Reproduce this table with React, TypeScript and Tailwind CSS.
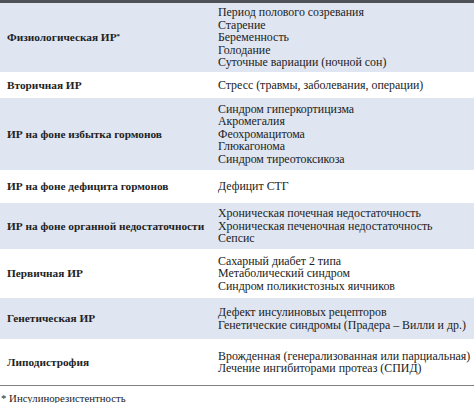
const rows: { label: string; items: string[]; h: string; blue: boolean }[] = [
  {
    label: "Физиологическая ИР*",
    items: [
      "Период полового созревания",
      "Старение",
      "Беременность",
      "Голодание",
      "Суточные вариации (ночной сон)",
    ],
    h: "h-[69px]",
    blue: true,
  },
  { label: "Вторичная ИР", items: ["Стресс (травмы, заболевания, операции)"], h: "h-[26px]", blue: false },
  {
    label: "ИР на фоне избытка гормонов",
    items: ["Синдром гиперкортицизма", "Акромегалия", "Феохромацитома", "Глюкагонома", "Синдром тиреотоксикоза"],
    h: "h-[72px]",
    blue: true,
  },
  { label: "ИР на фоне дефицита гормонов", items: ["Дефицит СТГ"], h: "h-[33px]", blue: false },
  {
    label: "ИР на фоне органной недостаточности",
    items: ["Хроническая почечная недостаточность", "Хроническая печеночная недостаточность", "Сепсис"],
    h: "h-[46px]",
    blue: true,
  },
  {
    label: "Первичная ИР",
    items: ["Сахарный диабет 2 типа", "Метаболический синдром", "Синдром поликистозных яичников"],
    h: "h-[49px]",
    blue: false,
  },
  {
    label: "Генетическая ИР",
    items: ["Дефект инсулиновых рецепторов", "Генетические синдромы (Прадера – Вилли и др.)"],
    h: "h-[41px]",
    blue: true,
  },
  {
    label: "Липодистрофия",
    items: ["Врожденная (генерализованная или парциальная)", "Лечение ингибиторами протеаз (СПИД)"],
    h: "h-[46px]",
    blue: false,
  },
];

export default function App() {
  return (
    <div className="w-[474px] h-[403px] bg-white overflow-hidden text-[#222] [font-family:Liberation_Serif,Times_New_Roman,serif] text-[11.9px] leading-[12.4px]">
      <div className="h-[3px] bg-[#4f5159]" />
      {rows.map((r) => (
        <div key={r.label} className={`flex items-center ${r.h} ${r.blue ? "bg-[#dfe5f1]" : "bg-white"}`}>
          <div className="w-[218px] shrink-0 pl-[7px] font-bold text-[11.3px] whitespace-nowrap">
            {r.label.endsWith("*") ? (
              <>
                {r.label.slice(0, -1)}
                <sup className="text-[7px]">*</sup>
              </>
            ) : (
              r.label
            )}
          </div>
          <div className="flex flex-col whitespace-nowrap">
            {r.items.map((t) => (
              <div key={t}>{t}</div>
            ))}
          </div>
        </div>
      ))}
      <div className="h-px bg-[#808080]" />
      <div className="pl-px pt-[6px] text-[10.8px]">* Инсулинорезистентность</div>
    </div>
  );
}
